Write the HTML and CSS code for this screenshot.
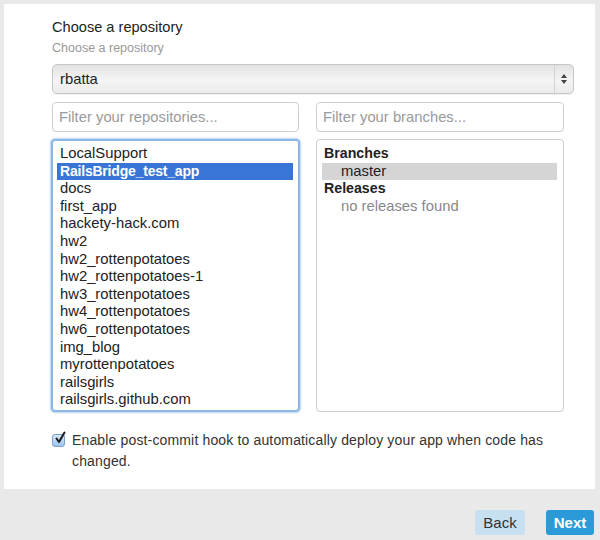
FILE: index.html
```html
<!DOCTYPE html>
<html>
<head>
<meta charset="utf-8">
<link rel="stylesheet" href="styles.css">
</head>
<body>
<div class="panel">
  <h2 class="title">Choose a repository</h2>
  <div class="subtitle">Choose a repository</div>
  <div class="select">
    <span class="select-value">rbatta</span>
    <span class="select-arrows">
      <svg width="8" height="12" viewBox="0 0 8 12"><path d="M4 1 L7 5 L1 5 Z" fill="#444"/><path d="M4 11 L7 7 L1 7 Z" fill="#444"/></svg>
    </span>
  </div>
  <div class="columns">
    <div class="input">Filter your repositories...</div>
    <div class="input">Filter your branches...</div>
    <div class="list list-focus">
      <div class="opt">LocalSupport</div>
      <div class="opt selected">RailsBridge_test_app</div>
      <div class="opt">docs</div>
      <div class="opt">first_app</div>
      <div class="opt">hackety-hack.com</div>
      <div class="opt">hw2</div>
      <div class="opt">hw2_rottenpotatoes</div>
      <div class="opt">hw2_rottenpotatoes-1</div>
      <div class="opt">hw3_rottenpotatoes</div>
      <div class="opt">hw4_rottenpotatoes</div>
      <div class="opt">hw6_rottenpotatoes</div>
      <div class="opt">img_blog</div>
      <div class="opt">myrottenpotatoes</div>
      <div class="opt">railsgirls</div>
      <div class="opt">railsgirls.github.com</div>
    </div>
    <div class="list list-plain">
      <div class="group">Branches</div>
      <div class="opt sub current">master</div>
      <div class="group">Releases</div>
      <div class="opt sub muted">no releases found</div>
    </div>
  </div>
  <div class="hook">
    <span class="checkbox">
      <svg width="12" height="13" viewBox="0 0 12 13"><path d="M2.5 7.5 L5 11 L10.5 1.5" fill="none" stroke="#1a1a1a" stroke-width="2" stroke-linecap="round" stroke-linejoin="round"/></svg>
    </span>
    <span class="hook-text">Enable post-commit hook to automatically deploy your app when code has changed.</span>
  </div>
</div>
<div class="footer">
  <span class="btn btn-back">Back</span>
  <span class="btn btn-next">Next</span>
</div>
</body>
</html>
```

FILE: styles.css
```css
html, body {
  margin: 0;
  padding: 0;
}
body {
  background: #e9e9e9;
  font-family: "Liberation Sans", Arial, sans-serif;
  color: #333;
  width: 600px;
  height: 540px;
  overflow: hidden;
}
.panel {
  background: #fff;
  margin: 4px 5px 0 4px;
  height: 485px;
  box-sizing: border-box;
  padding: 13px 0 0 48px;
}
.title {
  margin: 0;
  font-size: 14.6px;
  font-weight: normal;
  line-height: 20px;
  color: #222;
}
.subtitle {
  margin-top: 3px;
  font-size: 12.5px;
  line-height: 16px;
  color: #999;
}
.select {
  margin-top: 8px;
  width: 522px;
  height: 30px;
  box-sizing: border-box;
  border: 1px solid #c6c6c6;
  border-radius: 5px;
  background: linear-gradient(#e2e2e2, #f5f5f5 55%, #ebebeb);
  display: flex;
  align-items: center;
  box-shadow: 0 1px 1px rgba(0,0,0,0.06);
}
.select-value {
  flex: 1;
  padding-left: 7px;
  font-size: 14.8px;
  color: #222;
}
.select-arrows {
  width: 18px;
  height: 100%;
  border-left: 1px solid #d2d2d2;
  display: flex;
  align-items: center;
  justify-content: center;
}
.columns {
  margin-top: 8px;
  display: grid;
  grid-template-columns: 247px 248px;
  column-gap: 17px;
  row-gap: 7px;
  width: 512px;
}
.input {
  height: 30px;
  box-sizing: border-box;
  border: 1px solid #cdcdcd;
  border-radius: 4px;
  padding-left: 6px;
  font-size: 14.8px;
  line-height: 28px;
  color: #9a9a9a;
}
.list {
  height: 273px;
  box-sizing: border-box;
  font-size: 14.8px;
  line-height: 17.6px;
}
.list-focus {
  border: 2px solid #8cb6e6;
  border-radius: 4px;
  box-shadow: 0 0 2px 1px #b9d3f1;
  padding: 4px 5px 0 4px;
  margin-left: -1px;
  width: 249px;
}
.list-plain {
  border: 1px solid #cdcdcd;
  border-radius: 4px;
  padding: 5px 6px 0 5px;
}
.opt {
  padding-left: 3px;
  color: #222;
  white-space: nowrap;
}
.opt.selected {
  background: #3875d7;
  color: #fff;
  font-weight: bold;
  font-size: 14px;
  letter-spacing: -0.2px;
}
.group {
  padding-left: 2px;
  font-weight: bold;
  font-size: 14.2px;
  color: #222;
}
.opt.sub {
  padding-left: 19px;
}
.opt.current {
  background: #d5d5d5;
}
.opt.muted {
  color: #888;
}
.hook {
  margin-top: 18px;
  display: flex;
  align-items: flex-start;
  width: 530px;
}
.checkbox {
  flex: none;
  width: 13px;
  height: 13px;
  margin-top: 4px;
  box-sizing: border-box;
  border: 1px solid #7c9fca;
  border-radius: 3px;
  background: linear-gradient(#d7e8fb, #9ec4ef);
  margin-right: 7px;
  position: relative;
}
.checkbox svg {
  position: absolute;
  left: 1px;
  top: -4px;
}
.hook-text {
  font-size: 14px;
  line-height: 21px;
  color: #333;
  letter-spacing: 0.15px;
}
.footer {
  display: flex;
  justify-content: flex-end;
  gap: 21px;
  padding: 21px 6px 0 0;
}
.btn {
  height: 25px;
  box-sizing: border-box;
  border-radius: 3px;
  font-size: 15px;
  line-height: 25px;
  text-align: center;
}
.btn-back {
  width: 50px;
  background: #c6e0f1;
  color: #333;
}
.btn-next {
  width: 48px;
  background: #2a9bd8;
  color: #fff;
  font-weight: bold;
}
```
